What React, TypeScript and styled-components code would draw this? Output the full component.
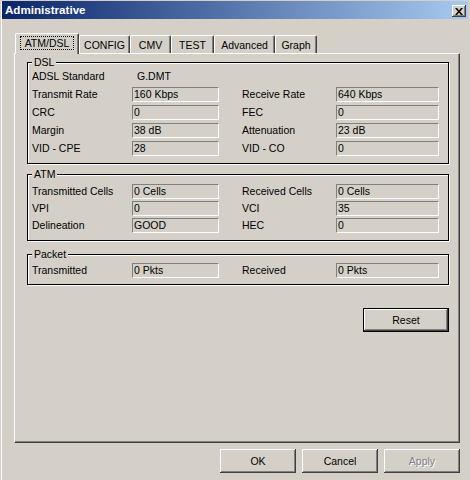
import React from 'react'
import styled, { createGlobalStyle } from 'styled-components'

const GlobalStyle = createGlobalStyle`
    html, body {
        margin: 0;
        padding: 0;
        background: #d4d0c8;
    }
    body {
        font-family: 'Liberation Sans', Arial, sans-serif;
        font-size: 10.5px;
        color: #000;
    }
`

const face = '#d4d0c8'
const shadow = '#808080'
const darkShadow = '#404040'

const Window = styled.div`
    width: 470px;
    height: 480px;
    box-sizing: border-box;
    padding: 1px 2px 0 2px;
    background: ${face};
    box-shadow: inset 1px 1px 0 ${face}, inset 2px 1px 0 #fff;
    overflow: hidden;
`

const TitleBar = styled.div`
    height: 18px;
    display: flex;
    align-items: center;
    justify-content: space-between;
    padding: 0 2px 0 3px;
    background: linear-gradient(to right, #0a246a, #a6caf0);
`

const Title = styled.span`
    color: #fff;
    font-weight: bold;
    font-size: 11.6px;
    line-height: 18px;
`

const CloseButton = styled.button`
    width: 14px;
    height: 12px;
    margin-top: 2px;
    padding: 0;
    border: none;
    display: flex;
    align-items: center;
    justify-content: center;
    background: ${face};
    box-shadow: inset -1px -1px 0 ${darkShadow}, inset 1px 1px 0 #fff, inset -2px -2px 0 ${shadow};
`

const Body = styled.div`
    padding: 14px 8px 0 12px;
`

const TabRow = styled.div`
    display: flex;
    align-items: flex-end;
    height: 21px;
    padding-left: 1px;
    margin-bottom: -1px;
    position: relative;
    z-index: 1;
`

const Tab = styled.div<{ $active?: boolean; $w: number }>`
    box-sizing: border-box;
    width: ${p => p.$w}px;
    height: ${p => (p.$active ? 21 : 18)}px;
    margin-bottom: ${p => (p.$active ? 0 : 1)}px;
    display: flex;
    align-items: center;
    justify-content: center;
    padding-bottom: ${p => (p.$active ? 2 : 0)}px;
    background: ${face};
    border-left: 1px solid #fff;
    border-top: 1px solid #fff;
    border-right: 1px solid ${darkShadow};
    border-radius: 2px 2px 0 0;
    box-shadow: inset -1px 0 0 ${shadow};
    white-space: nowrap;
`

const FocusRing = styled.span`
    outline: 1px dotted #000;
    outline-offset: 0;
    padding: 0 4px;
    line-height: 12px;
`

const TabPanel = styled.div`
    box-sizing: border-box;
    height: 390px;
    padding: 8px 10px 0 12px;
    border-top: 1px solid #fff;
    border-left: 1px solid #fff;
    border-right: 1px solid ${darkShadow};
    border-bottom: 1px solid ${darkShadow};
    box-shadow: inset -1px -1px 0 ${shadow};
`

const GroupBox = styled.div<{ $mt?: number; $pt: number; $pb: number }>`
    position: relative;
    margin-top: ${p => p.$mt ?? 0}px;
    padding: ${p => p.$pt}px 0 ${p => p.$pb}px 4px;
    border: 1px solid #000;
    box-shadow: 1px 1px 0 #fff, inset 1px 1px 0 #fff;
`

const GroupLabel = styled.span`
    position: absolute;
    top: -7px;
    left: 4px;
    padding: 0 2px;
    line-height: 13px;
    background: ${face};
`

const FieldGrid = styled.div<{ $gap: number }>`
    display: grid;
    grid-template-columns: 100px 110px 94px 103px;
    grid-auto-rows: 15px;
    row-gap: ${p => p.$gap}px;
    align-items: center;
`

const Label = styled.span`
    line-height: 15px;
    white-space: nowrap;
`

const StaticValue = styled.span`
    padding-left: 5px;
    line-height: 15px;
`

const Field = styled.div<{ $w: number }>`
    box-sizing: border-box;
    width: ${p => p.$w}px;
    height: 15px;
    padding-left: 1px;
    line-height: 13px;
    border-top: 1px solid ${shadow};
    border-left: 1px solid ${shadow};
    border-right: 1px solid #fff;
    border-bottom: 1px solid #fff;
    white-space: nowrap;
    overflow: hidden;
`

const ActionRow = styled.div`
    display: flex;
    justify-content: flex-end;
    margin-top: 23px;
`

const Button = styled.button<{ $default?: boolean }>`
    box-sizing: border-box;
    width: ${p => (p.$default ? 86 : 76)}px;
    height: 24px;
    padding: 0;
    font: inherit;
    font-size: 10.5px;
    color: #000;
    background: ${face};
    border: ${p => (p.$default ? '1px solid #000' : 'none')};
    box-shadow: inset -1px -1px 0 ${darkShadow}, inset 1px 1px 0 #fff, inset -2px -2px 0 ${shadow};

    &:disabled {
        color: ${shadow};
        text-shadow: 1px 1px 0 #fff;
    }
`

const Footer = styled.div`
    display: flex;
    justify-content: flex-end;
    gap: 6px;
    margin-top: 6px;
`

type Row = [string, string, string?, string?]

const dslRows: Row[] = [
    ['Transmit Rate', '160 Kbps', 'Receive Rate', '640 Kbps'],
    ['CRC', '0', 'FEC', '0'],
    ['Margin', '38 dB', 'Attenuation', '23 dB'],
    ['VID - CPE', '28', 'VID - CO', '0'],
]

const atmRows: Row[] = [
    ['Transmitted Cells', '0 Cells', 'Received Cells', '0 Cells'],
    ['VPI', '0', 'VCI', '35'],
    ['Delineation', 'GOOD', 'HEC', '0'],
]

const packetRows: Row[] = [['Transmitted', '0 Pkts', 'Received', '0 Pkts']]

const tabs = [
    { name: 'ATM/DSL', w: 64 },
    { name: 'CONFIG', w: 51 },
    { name: 'CMV', w: 41 },
    { name: 'TEST', w: 43 },
    { name: 'Advanced', w: 61 },
    { name: 'Graph', w: 42 },
]

const Rows = ({ rows }: { rows: Row[] }) => (
    <>
        {rows.map(([l1, v1, l2, v2]) => (
            <React.Fragment key={l1}>
                <Label>{l1}</Label>
                <Field $w={87}>{v1}</Field>
                <Label>{l2}</Label>
                <Field $w={103}>{v2}</Field>
            </React.Fragment>
        ))}
    </>
)

const App = () => {
    return (
        <Window>
            <GlobalStyle />
            <TitleBar>
                <Title>Administrative</Title>
                <CloseButton aria-label="Close">
                    <svg width="8" height="7" viewBox="0 0 8 7">
                        <path d="M0 0h2l2 2.5L6 0h2L5 3.5 8 7H6L4 4.5 2 7H0l3-3.5z" fill="#000" />
                    </svg>
                </CloseButton>
            </TitleBar>
            <Body>
                <TabRow>
                    {tabs.map((t, i) => (
                        <Tab key={t.name} $w={t.w} $active={i === 0}>
                            {i === 0 ? <FocusRing>{t.name}</FocusRing> : t.name}
                        </Tab>
                    ))}
                </TabRow>
                <TabPanel>
                    <GroupBox $pt={6} $pb={7}>
                        <GroupLabel>DSL</GroupLabel>
                        <FieldGrid $gap={3}>
                            <Label>ADSL Standard</Label>
                            <StaticValue>G.DMT</StaticValue>
                            <span />
                            <span />
                            <Rows rows={dslRows} />
                        </FieldGrid>
                    </GroupBox>
                    <GroupBox $mt={10} $pt={9} $pb={7}>
                        <GroupLabel>ATM</GroupLabel>
                        <FieldGrid $gap={2}>
                            <Rows rows={atmRows} />
                        </FieldGrid>
                    </GroupBox>
                    <GroupBox $mt={13} $pt={8} $pb={6}>
                        <GroupLabel>Packet</GroupLabel>
                        <FieldGrid $gap={2}>
                            <Rows rows={packetRows} />
                        </FieldGrid>
                    </GroupBox>
                    <ActionRow>
                        <Button $default>Reset</Button>
                    </ActionRow>
                </TabPanel>
                <Footer>
                    <Button>OK</Button>
                    <Button>Cancel</Button>
                    <Button disabled>Apply</Button>
                </Footer>
            </Body>
        </Window>
    )
}

export default App
